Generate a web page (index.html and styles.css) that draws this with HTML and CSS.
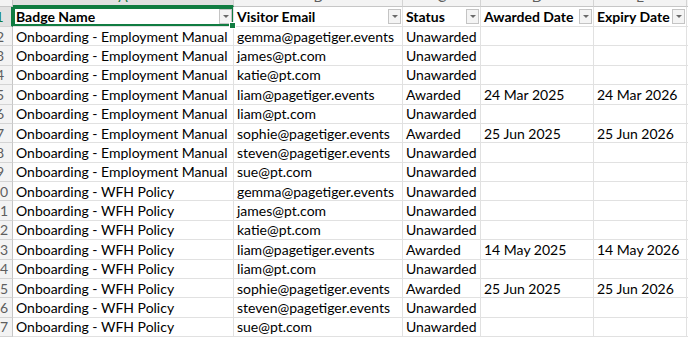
FILE: index.html
```html
<!DOCTYPE html>
<html>
<head>
<meta charset="utf-8">
<link rel="stylesheet" href="styles.css">
</head>
<body>
<div class="viewport">
  <div class="sheet">
    <div class="corner"></div>
    <div class="colhead sel">A</div>
    <div class="colhead">B</div>
    <div class="colhead">C</div>
    <div class="colhead">D</div>
    <div class="colhead">E</div>
    <div class="colhead">F</div>

    <div class="rowhead sel">1</div>
    <div class="cell hdr active"><span>Badge Name</span><span class="filter"></span></div>
    <div class="cell hdr"><span>Visitor Email</span><span class="filter"></span></div>
    <div class="cell hdr"><span>Status</span><span class="filter"></span></div>
    <div class="cell hdr"><span>Awarded Date</span><span class="filter"></span></div>
    <div class="cell hdr"><span>Expiry Date</span><span class="filter"></span></div>
    <div class="cell"></div>

    <div class="rowhead">2</div><div class="cell">Onboarding - Employment Manual</div><div class="cell">gemma@pagetiger.events</div><div class="cell">Unawarded</div><div class="cell"></div><div class="cell"></div><div class="cell"></div>
    <div class="rowhead">3</div><div class="cell">Onboarding - Employment Manual</div><div class="cell">james@pt.com</div><div class="cell">Unawarded</div><div class="cell"></div><div class="cell"></div><div class="cell"></div>
    <div class="rowhead">4</div><div class="cell">Onboarding - Employment Manual</div><div class="cell">katie@pt.com</div><div class="cell">Unawarded</div><div class="cell"></div><div class="cell"></div><div class="cell"></div>
    <div class="rowhead">5</div><div class="cell">Onboarding - Employment Manual</div><div class="cell">liam@pagetiger.events</div><div class="cell">Awarded</div><div class="cell">24 Mar 2025</div><div class="cell">24 Mar 2026</div><div class="cell"></div>
    <div class="rowhead">6</div><div class="cell">Onboarding - Employment Manual</div><div class="cell">liam@pt.com</div><div class="cell">Unawarded</div><div class="cell"></div><div class="cell"></div><div class="cell"></div>
    <div class="rowhead">7</div><div class="cell">Onboarding - Employment Manual</div><div class="cell">sophie@pagetiger.events</div><div class="cell">Awarded</div><div class="cell">25 Jun 2025</div><div class="cell">25 Jun 2026</div><div class="cell"></div>
    <div class="rowhead">8</div><div class="cell">Onboarding - Employment Manual</div><div class="cell">steven@pagetiger.events</div><div class="cell">Unawarded</div><div class="cell"></div><div class="cell"></div><div class="cell"></div>
    <div class="rowhead">9</div><div class="cell">Onboarding - Employment Manual</div><div class="cell">sue@pt.com</div><div class="cell">Unawarded</div><div class="cell"></div><div class="cell"></div><div class="cell"></div>
    <div class="rowhead">10</div><div class="cell">Onboarding - WFH Policy</div><div class="cell">gemma@pagetiger.events</div><div class="cell">Unawarded</div><div class="cell"></div><div class="cell"></div><div class="cell"></div>
    <div class="rowhead">11</div><div class="cell">Onboarding - WFH Policy</div><div class="cell">james@pt.com</div><div class="cell">Unawarded</div><div class="cell"></div><div class="cell"></div><div class="cell"></div>
    <div class="rowhead">12</div><div class="cell">Onboarding - WFH Policy</div><div class="cell">katie@pt.com</div><div class="cell">Unawarded</div><div class="cell"></div><div class="cell"></div><div class="cell"></div>
    <div class="rowhead">13</div><div class="cell">Onboarding - WFH Policy</div><div class="cell">liam@pagetiger.events</div><div class="cell">Awarded</div><div class="cell">14 May 2025</div><div class="cell">14 May 2026</div><div class="cell"></div>
    <div class="rowhead">14</div><div class="cell">Onboarding - WFH Policy</div><div class="cell">liam@pt.com</div><div class="cell">Unawarded</div><div class="cell"></div><div class="cell"></div><div class="cell"></div>
    <div class="rowhead">15</div><div class="cell">Onboarding - WFH Policy</div><div class="cell">sophie@pagetiger.events</div><div class="cell">Awarded</div><div class="cell">25 Jun 2025</div><div class="cell">25 Jun 2026</div><div class="cell"></div>
    <div class="rowhead">16</div><div class="cell">Onboarding - WFH Policy</div><div class="cell">steven@pagetiger.events</div><div class="cell">Unawarded</div><div class="cell"></div><div class="cell"></div><div class="cell"></div>
    <div class="rowhead">17</div><div class="cell">Onboarding - WFH Policy</div><div class="cell">sue@pt.com</div><div class="cell">Unawarded</div><div class="cell"></div><div class="cell"></div><div class="cell"></div>
  </div>
</div>
</body>
</html>
```
FILE: styles.css
```css
html, body {
  margin: 0;
  padding: 0;
  background: #ffffff;
}
.viewport {
  width: 688px;
  height: 337px;
  overflow: hidden;
}
.sheet {
  margin-left: -12px;
  margin-top: -13px;
  display: grid;
  grid-template-columns: 25px 221px 169px 78px 113px 93px 100px;
  grid-template-rows: 20px 20px repeat(16, 19.375px);
  font-family: Lato, "Open Sans", sans-serif;
  font-size: 14px;
  color: #000;
}
.corner, .colhead, .rowhead {
  background: #f3f3f3;
  color: #5e5e5e;
  box-sizing: border-box;
}
.corner {
  border-right: 1px solid #c6c6c6;
  border-bottom: 1px solid #c6c6c6;
}
.colhead {
  border-right: 1px solid #d4d4d4;
  border-bottom: 1px solid #c6c6c6;
  display: flex;
  align-items: center;
  justify-content: center;
  font-size: 14px;
}
.colhead.sel {
  color: #107c41;
  background: #e1e1e1;
  border-bottom: 2px solid #107c41;
}
.rowhead {
  border-right: 1px solid #c6c6c6;
  border-bottom: 1px solid #d4d4d4;
  display: flex;
  align-items: center;
  justify-content: center;
  font-size: 14px;
}
.rowhead.sel {
  color: #107c41;
  background: #e1e1e1;
  border-right: 2px solid #107c41;
}
.cell {
  box-sizing: border-box;
  border-right: 1px solid #e1e1e1;
  border-bottom: 1px solid #e1e1e1;
  padding: 0 3px;
  display: flex;
  align-items: center;
  white-space: nowrap;
  overflow: hidden;
}
.cell.hdr {
  font-weight: bold;
  justify-content: space-between;
  padding-right: 1px;
}
.cell.active {
  position: relative;
  overflow: visible;
  box-shadow: inset 0 0 0 2px #107c41;
}
.cell.active::after {
  content: "";
  position: absolute;
  right: -3px;
  bottom: -3px;
  width: 5px;
  height: 5px;
  background: #107c41;
  border: 1px solid #ffffff;
  z-index: 2;
}
.filter {
  flex: none;
  width: 13px;
  height: 15px;
  box-sizing: border-box;
  border: 1px solid #c4c4c4;
  background: #f4f4f4;
  display: flex;
  align-items: center;
  justify-content: center;
}
.filter::before {
  content: "";
  width: 0;
  height: 0;
  border-left: 3px solid transparent;
  border-right: 3px solid transparent;
  border-top: 3px solid #6a6a6a;
}
```
